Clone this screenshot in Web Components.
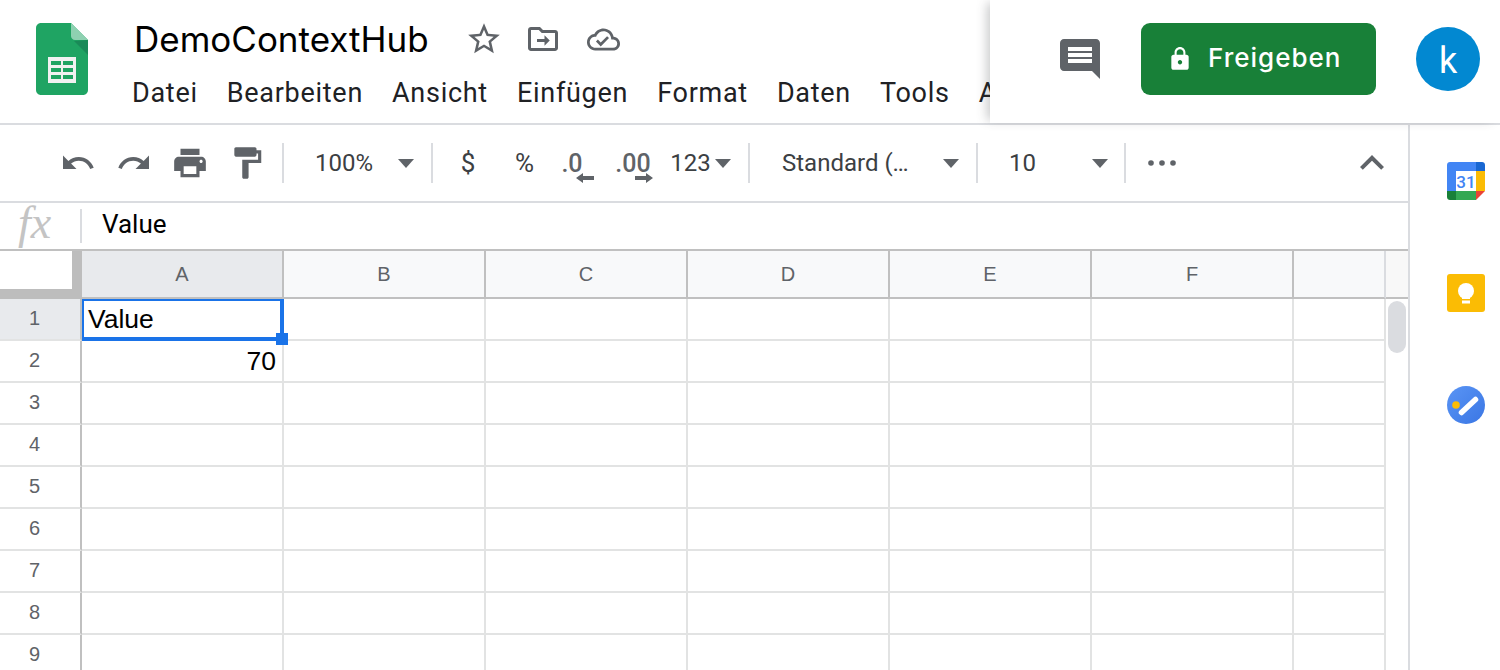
<!DOCTYPE html>
<html lang="de">
<head>
<meta charset="utf-8">
<title>DemoContextHub</title>
<style>
  html, body { margin: 0; height: 100%; overflow: hidden; background: #fff; }
  body { display: flex; flex-direction: column; font-family: Roboto, "Liberation Sans", sans-serif; }
</style>
</head>
<body>
<app-header></app-header>
<div style="display:flex;flex:1;min-height:0">
  <div style="flex:1;min-width:0;display:flex;flex-direction:column">
    <sheet-toolbar></sheet-toolbar>
    <formula-bar>Value</formula-bar>
    <sheet-grid></sheet-grid>
  </div>
  <side-panel></side-panel>
</div>

<script>
"use strict";

(function() {
  const icons = {
    star: 'M22 9.24l-7.19-.62L12 2 9.19 8.63 2 9.24l5.46 4.73L5.82 21 12 17.27 18.18 21l-1.63-7.03L22 9.24zM12 15.4l-3.76 2.27 1-4.28-3.32-2.88 4.38-.38L12 6.1l1.71 4.04 4.38.38-3.32 2.88 1 4.28L12 15.4z',
    move: 'M20 6h-8l-2-2H4c-1.11 0-2 .89-2 2v12c0 1.11.89 2 2 2h16c1.11 0 2-.89 2-2V8c0-1.11-.89-2-2-2zm0 12H4V6h5.17l2 2H20v10zM13 9.5l3.5 3.5-3.5 3.5V14H8v-2h5V9.500z',
    cloud: 'M19.35 10.04C18.67 6.59 15.64 4 12 4 9.11 4 6.6 5.64 5.35 8.04 2.34 8.36 0 10.91 0 14c0 3.31 2.69 6 6 6h13c2.76 0 5-2.24 5-5 0-2.64-2.05-4.78-4.65-4.96zM19 18H6c-2.21 0-4-1.79-4-4 0-2.05 1.53-3.76 3.56-3.97l1.07-.11.5-.95C8.08 7.14 9.94 6 12 6c2.62 0 4.88 1.86 5.39 4.43l.3 1.5 1.53.11c1.56.1 2.78 1.41 2.78 2.96 0 1.65-1.35 3-3 3zm-9-3.82l-2.09-2.09L6.5 13.5 10 17l6.01-6.01-1.41-1.41z',
    comment: 'M21.99 4c0-1.1-.89-2-1.99-2H4c-1.1 0-2 .9-2 2v12c0 1.1.9 2 2 2h14l4 4-.01-18zM18 14H6v-2h12v2zm0-3H6V9h12v2zm0-3H6V6h12v2z',
    lock: 'M18 8h-1V6c0-2.76-2.24-5-5-5S7 3.24 7 6v2H6c-1.1 0-2 .9-2 2v10c0 1.1.9 2 2 2h12c1.1 0 2-.9 2-2V10c0-1.1-.9-2-2-2zm-6 9c-1.1 0-2-.9-2-2s.9-2 2-2 2 .9 2 2-.9 2-2 2zm3.100-9H8.900V6c0-1.710 1.390-3.100 3.100-3.100 1.710 0 3.100 1.390 3.100 3.100v2z',
    undo: 'M12.5 8c-2.65 0-5.05.99-6.9 2.6L2 7v9h9l-3.62-3.62c1.39-1.16 3.16-1.88 5.12-1.88 3.54 0 6.55 2.31 7.6 5.5l2.37-.78C21.08 11.03 17.15 8 12.5 8z',
    redo: 'M18.4 10.6C16.55 8.99 14.15 8 11.5 8c-4.65 0-8.58 3.03-9.96 7.22L3.9 16c1.05-3.19 4.05-5.5 7.6-5.5 1.95 0 3.73.72 5.12 1.88L13 16h9V7l-3.6 3.6z',
    print: 'M19 8H5c-1.66 0-3 1.34-3 3v6h4v4h12v-4h4v-6c0-1.66-1.34-3-3-3zm-3 11H8v-5h8v5zm3-7c-.55 0-1-.45-1-1s.45-1 1-1 1 .45 1 1-.45 1-1 1zm-1-9H6v4h12V3z',
    paint: 'M18 4V3c0-.55-.45-1-1-1H5c-.55 0-1 .45-1 1v4c0 .55.45 1 1 1h12c.55 0 1-.45 1-1V6h1v4H9v11c0 .55.45 1 1 1h2c.55 0 1-.45 1-1v-9h8V4h-3z',
    chevron: 'M7.41 15.41L12 10.83l4.59 4.58L18 14l-6-6-6 6z'
  };

  const svg = (name, size, fill) =>
    `<svg width="${size}" height="${size}" viewBox="0 0 24 24" fill="${fill || '#5f6368'}" style="display:block"><path d="${icons[name]}"/></svg>`;

  const sheetsLogo = `
    <svg width="52" height="72" viewBox="0 0 52 72" style="display:block">
      <path d="M35 0H5C2.200 0 0 2.200 0 5v62c0 2.800 2.200 5 5 5h42c2.800 0 5-2.200 5-5V17z" fill="#1fa463"/>
      <path d="M38 18L52 32V17z" fill="#1a8a58"/>
      <path d="M35 0l17 17H39c-2.200 0-4-1.800-4-4z" fill="#8ed1b1"/>
      <path d="M12 34h28v26H12z" fill="#f1f1f1"/>
      <path d="M15 38h10v4H15zM27 38h10v4H27zM15 45h10v4H15zM27 45h10v4H27zM15 52h10v4H15zM27 52h10v4H27z" fill="#1fa463"/>
    </svg>`;

  class AppHeader extends HTMLElement {
    constructor() {
      super()
      this.attachShadow({mode: 'open'})
      this.shadowRoot.innerHTML = `
      <style>
        :host { display: flex; height: 125px; box-sizing: border-box; border-bottom: 2px solid #dadce0; flex: none; }
        .left { flex: 1; min-width: 0; display: flex; overflow: hidden; }
        .logo { padding: 23px 0 0 36px; width: 97px; flex: none; }
        .info { padding-top: 16px; white-space: nowrap; }
        .title { display: flex; align-items: center; height: 46px; }
        .name { font: 400 35px/46px Inter, sans-serif; color: #000; width: 332px; padding-left: 1px; box-sizing: border-box; }
        .title svg { flex: none; }
        .title span.ic { width: 60px; }
        .menu { display: flex; margin: 7px 0 0 -1px; font: 400 27px/48px Roboto, sans-serif; letter-spacing: .72px; color: #202124; gap: 29px; }
        .right { flex: none; width: 510px; height: 123px; background: #fff; box-shadow: -6px 0 10px -3px rgba(60,64,67,.28); display: flex; align-items: flex-start; position: relative; }
        .comment { margin: 35px 0 0 66px; }
        .share { margin: 23px 0 0 37px; width: 235px; height: 72px; box-sizing: border-box; padding: 0 0 3px 26px; border-radius: 9px; background: #188038; color: #fff; display: flex; align-items: center; gap: 15px; font: 500 26px Inter, sans-serif; letter-spacing: 1px; }
        .share svg { margin-top: 3px; }
        .avatar { margin: 27px 0 0 40px; width: 64px; height: 64px; padding-top: 3px; box-sizing: border-box; border-radius: 50%; background: #0288d1; color: #fff; display: flex; align-items: center; justify-content: center; font: 400 36px Roboto, sans-serif; }
      </style>
      <div class="left">
        <div class="logo">${sheetsLogo}</div>
        <div class="info">
          <div class="title">
            <div class="name">DemoContextHub</div>
            <span class="ic">${svg('star', 38)}</span>
            <span class="ic">${svg('move', 36)}</span>
            <span class="ic" style="padding-left:2px">${svg('cloud', 33)}</span>
          </div>
          <div class="menu">
            <span>Datei</span><span>Bearbeiten</span><span>Ansicht</span><span>Einfügen</span><span>Format</span><span>Daten</span><span>Tools</span><span>Add-ons</span>
          </div>
        </div>
      </div>
      <div class="right">
        <div class="comment">${svg('comment', 48)}</div>
        <div class="share">${svg('lock', 26, '#fff')}<span>Freigeben</span></div>
        <div class="avatar">k</div>
      </div>`
    }
  }
  customElements.define('app-header', AppHeader)

  // one toolbar cell: fixed width, content centred
  class ToolCell extends HTMLElement {
    constructor() {
      super()
      this.attachShadow({mode: 'open'})
      this.shadowRoot.innerHTML = `
      <style>
        :host { display: flex; align-items: center; justify-content: center; flex: none; height: 40px; position: relative; }
      </style>
      <slot></slot>`
    }
    connectedCallback() {
      this.style.width = this.getAttribute('w') + 'px'
    }
  }
  customElements.define('tool-cell', ToolCell)

  const arrow = `<svg width="16" height="9" viewBox="0 0 16 9" style="display:block;flex:none"><path d="M0 0h16L8 9z" fill="#5f6368"/></svg>`
  const sep = `<i class="sep"></i>`

  class SheetToolbar extends HTMLElement {
    constructor() {
      super()
      this.attachShadow({mode: 'open'})
      this.shadowRoot.innerHTML = `
      <style>
        :host { display: flex; align-items: center; height: 78px; box-sizing: border-box; border-bottom: 2px solid #dadce0; padding: 0 0 0 50px; font: 400 24px Roboto, sans-serif; color: #3c4043; flex: none; }
        .sep { display: block; flex: none; width: 2px; height: 40px; background: #dadce0; }
        .big { font-size: 26px; }
        .dec { font-size: 25px; font-weight: 500; color: #5f6368; position: relative; }
        .dec svg { position: absolute; top: 24px; }
      </style>
      <tool-cell w="56">${svg('undo', 36)}</tool-cell>
      <tool-cell w="56">${svg('redo', 36)}</tool-cell>
      <tool-cell w="56">${svg('print', 38)}</tool-cell>
      <tool-cell w="58" style="margin-right:6px">${svg('paint', 38)}</tool-cell>
      ${sep}
      <tool-cell w="130" style="justify-content:flex-start;padding-left:31px;box-sizing:border-box"><span style="width:83px">100%</span>${arrow}</tool-cell>
      <tool-cell w="17"></tool-cell>
      ${sep}
      <tool-cell w="70"><span class="big">$</span></tool-cell>
      <tool-cell w="43"><span class="big">%</span></tool-cell>
      <tool-cell w="52"><span class="dec">.0<svg style="left:15px" width="18" height="10" viewBox="0 0 18 10"><path d="M7 0v3h11v4H7v3L0 5z" fill="#5f6368"/></svg></span></tool-cell>
      <tool-cell w="70"><span class="dec">.00<svg style="left:20px" width="18" height="10" viewBox="0 0 18 10"><path d="M11 0v3H0v4h11v3l7-5z" fill="#5f6368"/></svg></span></tool-cell>
      <tool-cell w="45">123</tool-cell>
      <tool-cell w="2"></tool-cell>
      ${arrow}
      <tool-cell w="17"></tool-cell>
      ${sep}
      <tool-cell w="209" style="justify-content:flex-start;padding-left:32px;box-sizing:border-box"><span style="width:161px;flex:none">Standard (…</span>${arrow}</tool-cell>
      <tool-cell w="17"></tool-cell>
      ${sep}
      <tool-cell w="146" style="justify-content:flex-start;padding-left:31px;box-sizing:border-box"><span style="width:83px;flex:none">10</span>${arrow}</tool-cell>
      ${sep}
      <tool-cell w="72"><svg width="28" height="6" viewBox="0 0 28 6"><g fill="#5f6368"><circle cx="3" cy="3" r="2.800"/><circle cx="14" cy="3" r="2.800"/><circle cx="25" cy="3" r="2.800"/></g></svg></tool-cell>
      <span style="flex:1"></span>
      <tool-cell w="60" style="margin-right:6px">${svg('chevron', 48)}</tool-cell>`
    }
  }
  customElements.define('sheet-toolbar', SheetToolbar)

  class FormulaBar extends HTMLElement {
    constructor() {
      super()
      this.attachShadow({mode: 'open'})
      this.shadowRoot.innerHTML = `
      <style>
        :host { display: flex; align-items: center; height: 48px; box-sizing: border-box; border-bottom: 2px solid #c0c0c0; flex: none; }
        .fx { width: 80px; box-sizing: border-box; padding-left: 18px; font: italic 46px/44px "Liberation Serif", serif; color: #c4c4c4; margin-top: -6px; }
        .bar { width: 2px; height: 34px; background: #dadce0; }
        .val { padding: 0 0 4px 20px; font: 400 26px Roboto, sans-serif; color: #000; }
      </style>
      <div class="fx">fx</div><div class="bar"></div><div class="val"><slot></slot></div>`
    }
  }
  customElements.define('formula-bar', FormulaBar)

  class SheetGrid extends HTMLElement {
    constructor() {
      super()
      this.attachShadow({mode: 'open'})
      const columns = ['A', 'B', 'C', 'D', 'E', 'F', '']
      let cells = `<div class="corner"></div>`
      columns.forEach((c, i) => {
        cells += `<div class="ch ${i === 0 ? 'on' : ''}">${c}</div>`
      })
      cells += `<div class="ch end"></div>`
      for (let r = 1; r <= 9; r++) {
        cells += `<div class="rh ${r === 1 ? 'on' : ''}">${r}</div>`
        columns.forEach((c, i) => {
          let inner = '', cls = 'cell'
          if (r === 1 && i === 0) {
            inner = `Value<div class="sel"><div class="handle"></div></div>`
            cls += ' first'
          }
          if (r === 2 && i === 0) {
            inner = '70'
            cls += ' num'
          }
          cells += `<div class="${cls}">${inner}</div>`
        })
        cells += r === 1 ? `<div class="track"><div class="thumb"></div></div>` : ''
      }
      this.shadowRoot.innerHTML = `
      <style>
        :host { display: block; flex: 1; min-height: 0; overflow: hidden; }
        .grid { display: grid; grid-template-columns: 82px repeat(6, 202px) 92px 22px; grid-auto-rows: 42px; grid-template-rows: 48px; }
        .grid > div { box-sizing: border-box; }
        .corner { background: #fff; border-right: 10px solid #bdbdbd; border-bottom: 10px solid #bdbdbd; }
        .ch { background: #f8f9fa; border-right: 2px solid #c0c0c0; border-bottom: 2px solid #c0c0c0; display: flex; align-items: center; justify-content: center; font: 400 20px "Liberation Sans", sans-serif; color: #5f6368; }
        .ch:nth-child(8) { border-right-color: #dadce0; }
        .ch.end { border-right: 0; background: #f8f8f8; }
        .ch.on { background: #e8eaed; }
        .rh { border-right: 2px solid #c0c0c0; border-bottom: 2px solid #e2e3e3; display: flex; align-items: center; justify-content: center; font: 400 20px "Liberation Sans", sans-serif; color: #5f6368; padding: 0 11px 2px 0; }
        .rh.on { background: #e8eaed; }
        .cell { border-right: 2px solid #e2e3e3; border-bottom: 2px solid #e2e3e3; font: 400 26.5px "Liberation Sans", sans-serif; color: #000; display: flex; align-items: center; padding: 0 6px; }
        .first { position: relative; z-index: 2; }
        .num { justify-content: flex-end; }
        .sel { position: absolute; left: 0; top: 0; width: 202px; height: 42px; box-sizing: border-box; border: solid #1a73e8; border-width: 2px 4px 4px 2px; pointer-events: none; }
        .handle { position: absolute; right: -8px; bottom: -8px; width: 12px; height: 12px; background: #1a73e8; }
        .track { grid-column: 9; grid-row: 2 / span 9; position: relative; background: #fff; }
        .thumb { position: absolute; left: 2px; top: 2px; width: 18px; height: 52px; border-radius: 9px; background: #dadce0; }
      </style>
      <div class="grid">${cells}</div>`
    }
  }
  customElements.define('sheet-grid', SheetGrid)

  class SidePanel extends HTMLElement {
    constructor() {
      super()
      this.attachShadow({mode: 'open'})
      this.shadowRoot.innerHTML = `
      <style>
        :host { display: flex; flex-direction: column; gap: 74px; flex: none; width: 92px; box-sizing: border-box; border-left: 2px solid #dadce0; padding: 37px 0 0 37px; }
        svg { display: block; }
        text { font-family: Roboto, sans-serif; }
      </style>
      <svg width="38" height="38" viewBox="0 0 38 38">
        <path d="M9 9h20v20H9z" fill="#fff"/>
        <path d="M29 0H3C1.300 0 0 1.300 0 3v26h9V9h20z" fill="#4285f4"/>
        <path d="M29 9h9V3c0-1.700-1.300-3-3-3h-6z" fill="#1967d2"/>
        <path d="M29 9h9v20h-9z" fill="#fbbc04"/>
        <path d="M9 29h20v9H9z" fill="#34a853"/>
        <path d="M0 29v6c0 1.700 1.300 3 3 3h6v-9z" fill="#188038"/>
        <path d="M29 38l9-9h-9z" fill="#ea4335"/>
        <text x="19" y="25.500" font-size="17" font-weight="500" text-anchor="middle" fill="#4285f4">31</text>
      </svg>
      <svg width="38" height="38" viewBox="0 0 38 38">
        <rect width="38" height="38" rx="3" fill="#fbbc04"/>
        <circle cx="19" cy="17" r="8" fill="#fff"/>
        <path d="M15 22h8v3h-8zM15 26.500h8v3h-8z" fill="#fff"/>
      </svg>
      <svg width="38" height="38" viewBox="0 0 38 38">
        <defs><linearGradient id="t" x1="0" y1="0" x2="1" y2="1"><stop offset="0" stop-color="#5a95f5"/><stop offset="1" stop-color="#3a76e4"/></linearGradient></defs>
        <circle cx="19" cy="19" r="19" fill="url(#t)"/>
        <path d="M14.500 26.500L28.500 13.500" stroke="#fff" stroke-width="5.500" stroke-linecap="round"/>
        <circle cx="9" cy="19" r="3.800" fill="#fbbc04"/>
      </svg>`
    }
  }
  customElements.define('side-panel', SidePanel)
}).call(this);
</script>
</body>
</html>
